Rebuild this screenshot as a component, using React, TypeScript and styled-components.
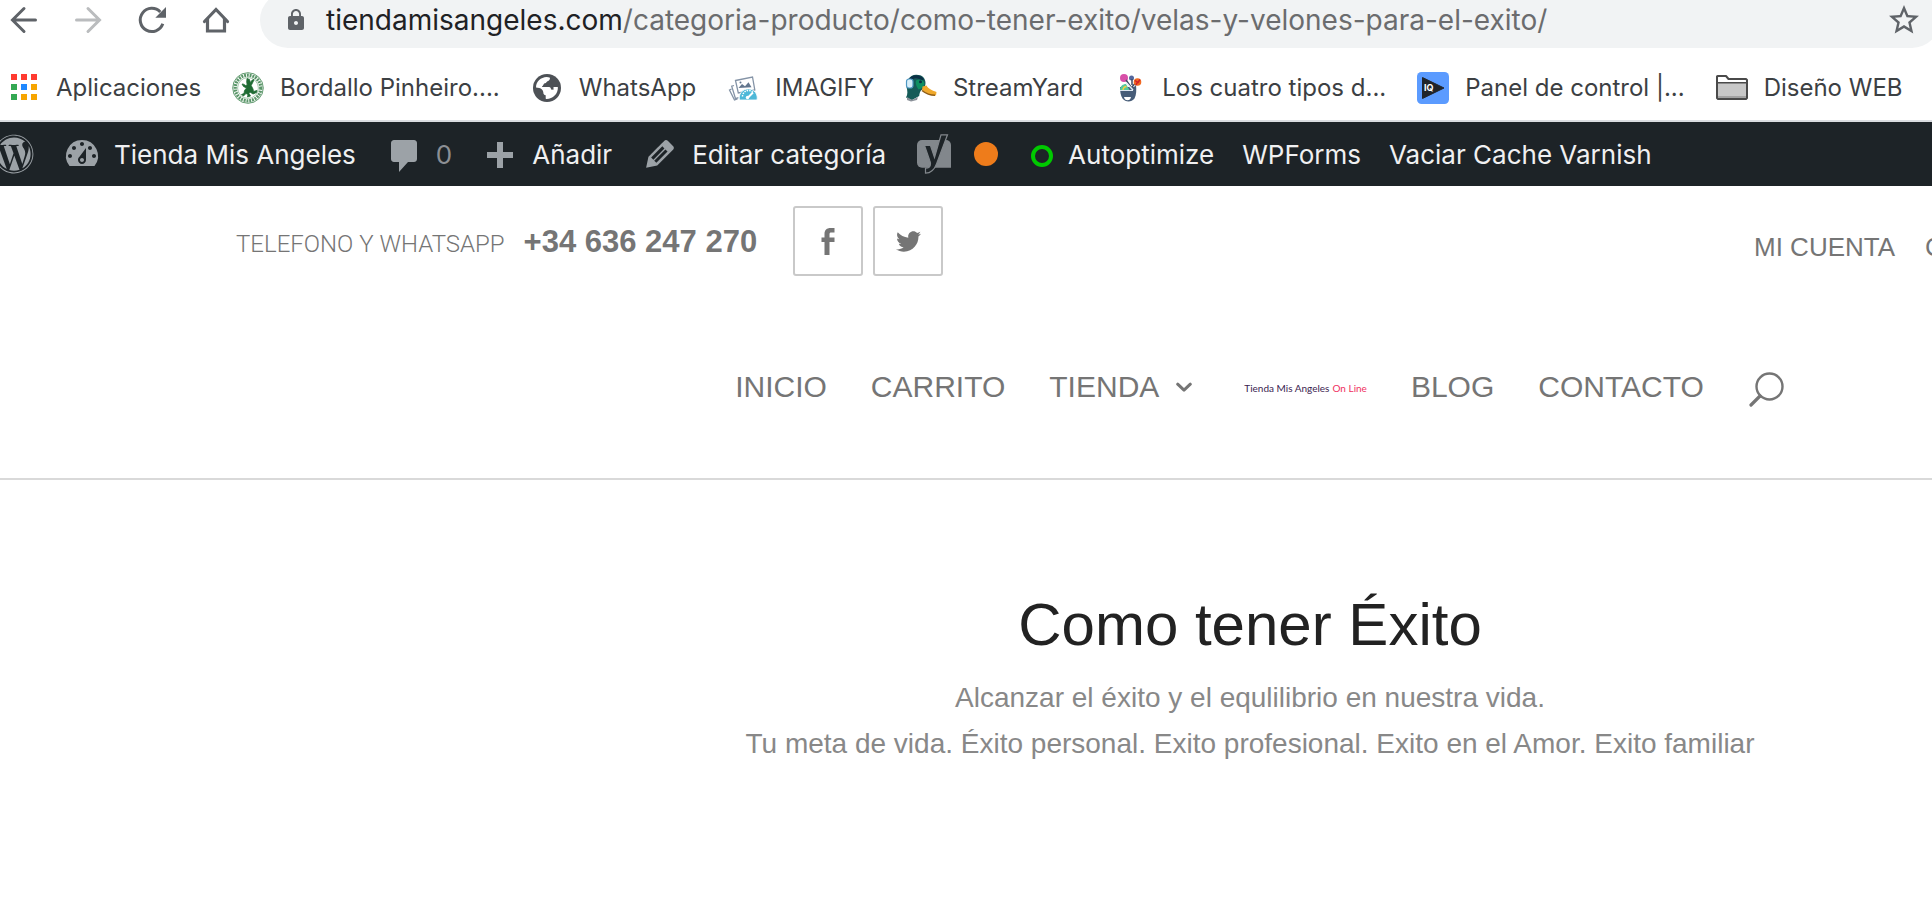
import React from "react";
import styled, { createGlobalStyle } from "styled-components";
import { MdLock, MdStarBorder } from "react-icons/md";
import { FaTwitter, FaWordpress } from "react-icons/fa";

const GlobalStyle = createGlobalStyle`
  * { box-sizing: border-box; }
  body {
    margin: 0;
    background: #fff;
    font-family: "Liberation Sans", Arial, sans-serif;
    overflow-x: hidden;
  }
  a { color: inherit; text-decoration: none; }
  button { padding: 0; border: 0; background: none; color: inherit; font: inherit; cursor: pointer; }
  svg { display: block; flex: none; }
  h1, p, ul { margin: 0; padding: 0; }
  ul { list-style: none; }
`;

/* ---------- browser chrome ---------- */

const Chrome = styled.div`
  font-family: Inter, "Liberation Sans", sans-serif;
  border-bottom: 2px solid #dadce0;
  overflow: hidden;
`;

const Toolbar = styled.div`
  display: flex;
  align-items: flex-end;
  height: 48px;
  padding-left: 4px;
`;

const ToolButtons = styled.div`
  display: flex;
  gap: 24px;
  margin: 0 24px 8px 0;
  color: #5f6368;
`;

const ToolButton = styled.button`
  display: grid;
  place-items: center;
  width: 40px;
  height: 40px;
  &:disabled { color: #babcbe; }
`;

const AddressBar = styled.div`
  display: flex;
  align-items: center;
  flex: 1;
  height: 56px;
  margin-right: -8px;
  padding: 0 18px 0 24px;
  border-radius: 28px;
  background: #f1f3f4;
  color: #5f6368;
`;

const Address = styled.div`
  flex: 1;
  margin-left: 18px;
  font-size: 28px;
  line-height: 40px;
  white-space: nowrap;
  color: #6b6c6e;
  outline: none;
`;

const Host = styled.span`
  color: #202124;
`;

const StarButton = styled(ToolButton)`
  width: 36px;
`;

const Bookmarks = styled.nav`
  display: flex;
  align-items: center;
  gap: 31px;
  height: 72px;
  padding: 8px 0 0 8px;
`;

const Bookmark = styled.a`
  display: flex;
  align-items: center;
  gap: 16px;
  font-size: 24px;
  line-height: 32px;
  white-space: nowrap;
  color: #3c4043;
`;

/* ---------- WordPress admin bar ---------- */

const AdminBar = styled.nav`
  display: flex;
  align-items: center;
  gap: 28px;
  height: 64px;
  background: #1d2327;
  color: #f0f0f1;
  font-family: Inter, "Liberation Sans", sans-serif;
  overflow: hidden;
`;

const AdminItem = styled.a<{ $gap?: number; $bleed?: boolean }>`
  display: flex;
  align-items: center;
  gap: ${(p) => p.$gap ?? 12}px;
  margin-left: ${(p) => (p.$bleed ? -6 : 0)}px;
  font-size: 26px;
  line-height: 32px;
  white-space: nowrap;
  svg { color: #9ca2a7; }
`;

const AdminLabel = styled.span`
  padding-top: 2px;
`;

const Count = styled(AdminLabel)`
  color: #8c8f94;
`;

const Dot = styled.span`
  width: 24px;
  height: 24px;
  border-radius: 50%;
  background: #ee7c1b;
`;

const Ring = styled.span`
  width: 22px;
  height: 22px;
  margin: 4px 3px 0 5px;
  border: 4px solid #00c900;
  border-radius: 50%;
`;

/* ---------- site header ---------- */

const SiteHeader = styled.header`
  border-bottom: 2px solid #d9d9d9;
  color: #757575;
`;

const TopRow = styled.div`
  display: flex;
  align-items: center;
  height: 110px;
  padding-left: 236px;
  overflow: hidden;
`;

const PhoneLabel = styled.span`
  margin-right: 19px;
  padding-top: 6px;
  font-family: Roboto, "Liberation Sans", sans-serif;
  font-size: 24px;
  font-weight: 300;
  line-height: 32px;
`;

const Phone = styled.a`
  margin-right: 36px;
  padding-top: 2px;
  font-size: 31px;
  font-weight: 700;
  line-height: 36px;
`;

const Social = styled.div`
  display: flex;
  gap: 10px;
`;

const SocialLink = styled.a`
  display: grid;
  place-items: center;
  width: 70px;
  height: 70px;
  border: 2px solid #c9c9c9;
  border-radius: 3px;
`;

const AccountMenu = styled.ul`
  display: flex;
  gap: 30px;
  width: 178px;
  margin-left: auto;
  padding-top: 12px;
  font-size: 26px;
  line-height: 32px;
  white-space: nowrap;
`;

const MainNav = styled.nav`
  display: flex;
  align-items: center;
  justify-content: center;
  gap: 44px;
  height: 182px;
  padding-left: 587px;
  font-size: 30px;
  line-height: 36px;
  white-space: nowrap;
`;

const NavLink = styled.a`
  display: flex;
  align-items: center;
  gap: 17px;
`;

const SubmenuLink = styled(NavLink)`
  padding-right: 8px;
`;

const Logo = styled.a`
  display: flex;
  gap: 3px;
  padding-top: 2px;
  font-family: Lato, "Open Sans", sans-serif;
  font-size: 10px;
  line-height: 12px;
  color: #3a2350;
`;

const LogoAccent = styled.span`
  color: #f0305e;
`;

const SearchButton = styled.button`
  padding-top: 5px;
`;

/* ---------- category intro ---------- */

const Intro = styled.main`
  padding: 115px 0 160px 568px;
  text-align: center;
`;

const Title = styled.h1`
  margin-bottom: 20px;
  font-size: 60px;
  font-weight: 400;
  line-height: 60px;
  color: #222;
`;

const Description = styled.p`
  font-size: 28px;
  line-height: 46px;
  color: #888;
`;

/* ---------- drawings ---------- */

const ArrowIcon = ({ forward = false }: { forward?: boolean }) => (
  <svg width="40" height="40" viewBox="0 0 40 40" fill="none" stroke="currentColor" strokeWidth="3" strokeLinecap="round">
    {forward ? <path d="M8.5 20H31M20 8.5L31.500 20 20 31.500" /> : <path d="M31.500 20H9M20 8.500L8.500 20 20 31.500" />}
  </svg>
);

const ReloadIcon = () => (
  <svg width="40" height="40" viewBox="0 0 40 40" fill="none" stroke="currentColor" strokeWidth="3">
    <path d="M28.300 12A11.600 11.600 0 1 0 30.800 23.800" />
    <path d="M34 7v10.700H23.300z" fill="currentColor" stroke="none" />
  </svg>
);

const HomeIcon = () => (
  <svg width="40" height="40" viewBox="0 0 40 40" fill="none" stroke="currentColor" strokeWidth="3.200" strokeLinejoin="miter">
    <path d="M11.500 18V31H28.500V18" />
    <path d="M8.500 21.500L20 9.500 31.500 21.500" strokeLinecap="round" />
  </svg>
);

const AppsIcon = () => {
  const fills = ["#ff3b30", "#ff3b30", "#ff3b30", "#34a853", "#1e88ff", "#f7a500", "#34a853", "#f7a500", "#f7a500"];
  return (
    <svg width="32" height="32" viewBox="0 0 32 32">
      {fills.map((f, i) => (
        <rect key={i} x={3 + (i % 3) * 10} y={2 + Math.floor(i / 3) * 10} width="6" height="6" fill={f} />
      ))}
    </svg>
  );
};

const FrogSeal = () => (
  <svg width="32" height="32" viewBox="0 0 32 32" fill="none" stroke="#2f7a42">
    <circle cx="16" cy="16" r="15.300" strokeWidth="1" opacity=".75" />
    <circle cx="16" cy="16" r="12.800" strokeWidth="3.200" strokeDasharray="1.900 .9" opacity=".8" />
    <circle cx="16" cy="16" r="10.400" strokeWidth=".6" opacity=".7" />
    <path fill="#1f6b33" stroke="#1f6b33" strokeWidth=".8" d="M15 6.500l2.500 1 .8 3 2-2.500 1.700-.5-1 2.500-1.800 3.500 1.800 3.500.5 2.500 3.500-1-.5 2-3.500 1.500-3-2-1 1.500 1.500 2.500-3 1 .5-2.500-2-1-2.500 2.500-2-1.500 2.500-1 .5-3 2-2.500-3-1.500-1.500-2.500 1.500.2 2.200 1.300 1.500-.5-.5-3z" />
  </svg>
);

const GlobeIcon = () => (
  <svg width="32" height="32" viewBox="0 0 32 32">
    <circle cx="16" cy="16" r="14" fill="#4d5156" />
    <path fill="#fff" d="M5 15.500C5 9.500 10 5.200 15.500 5c1.300 0 2.500.3 3.500.7 0 2-.8 3-2.500 3.500-1 .3-1 1.800-2.500 2-1.500.1-1.300 1.500-2 2.300-.6.600-1 .7-1 1.600h7c1.500 0 2 1.300 2 2.500l2.500.2V15h3.500c.4 0 .9.1.9.600C27 22 22 27 15.500 27c-.7 0-.8-.3-.8-1v-2.700c-1.700-.3-2.400-1.300-2.400-3-.2-2.300-2-3.600-4-4.200C7.200 15.700 6 15.700 5 15.500z" />
    <path fill="#4d5156" d="M22 13.200l4.500.2-1-2.400-3-2.500-1.800 2.200z" />
  </svg>
);

const ImagifyIcon = () => (
  <svg width="32" height="32" viewBox="0 0 32 32" fill="none" stroke="#8493a6" strokeWidth="1.300">
    <path d="M4.500 17l-2 1 5 10 3-1M7 13.500l-2.300.7 3.800 12.500 3-1" />
    <path d="M8.500 8.500l17-3.500 2.300 13-16.500 3z" fill="#fff" />
    <path d="M11.500 16l3.500-4 3 2.200 3.500-4 3 5z" fill="#63768e" stroke="none" />
    <circle cx="13.500" cy="10.500" r="1" fill="#63768e" stroke="none" />
    <path d="M12.500 28a9 9 0 1 1 17.500 0z" fill="#4db8d8" stroke="#fff" strokeWidth=".8" />
    <path d="M15.500 24.500a6 6 0 0 1 10.500-4" stroke="#fff" strokeWidth="1.400" strokeDasharray="1.500 1" />
    <path d="M20.500 26l5.500-5.500" stroke="#fff" strokeWidth="2" />
    <circle cx="20.500" cy="25.500" r="1.700" fill="#fff" stroke="none" />
  </svg>
);

const DuckIcon = () => (
  <svg width="32" height="32" viewBox="0 0 32 32">
    <path fill="#155b58" d="M1.500 15C1 8 5 3 11 2.700 17 2.500 20.500 6 20.500 11c0 3-1 5-4.500 7.500-1 1-1.500 3-1.800 5.500L7 28l-6-2.500C3 22 2.500 19 1.500 15z" />
    <path fill="#0b2f45" d="M3 8c3-5.500 12-7 16-.5l-3 1C12 5 8 6 6 9.500z" />
    <path fill="#0e8f62" d="M11 8.500c4-2 8-.5 8.500 3.500-1 3-3 5-6 5.500-2-3-3.500-6-2.500-9z" />
    <circle cx="15.500" cy="9.700" r="1.500" fill="#0b2f45" />
    <path fill="#f0a92c" d="M17.500 14.500l4-1c2 3.500 5 4.500 10 6.500l-.5 3.500c-6-.2-10-2-14-5.500z" />
    <path d="M17 18.500c4 3.200 8 4.800 13 4.800" stroke="#8f5c14" strokeWidth="1.500" fill="none" />
    <rect x="1.500" y="7" width="6.500" height="9" rx="2.500" fill="#d7effa" stroke="#4f98c4" strokeWidth="1.200" />
    <path fill="#8b9199" d="M2 25l5 3 6-3-1 3-6 1.500-4-1.500z" />
  </svg>
);

const HeadIcon = () => (
  <svg width="32" height="32" viewBox="0 0 32 32">
    <circle cx="10" cy="6" r="4" fill="#d84fa8" />
    <circle cx="17.500" cy="6" r="2.500" fill="#54679e" />
    <path d="M12 8l5 7M18 7v6M23 9l-5 6" stroke="#3d4c66" strokeWidth="1.500" />
    <circle cx="23.500" cy="10" r="3.800" fill="#f26a21" />
    <path d="M21 8.500l3 2 2-3M22 13l1.500-3" stroke="#d3202a" strokeWidth="1.500" fill="none" />
    <path fill="#465c78" d="M6 15h14l2-2c.5 5 .5 10-1.500 13.500-3 4-9 4-12 0C6.500 23.500 6 19 6 15z" />
    <path fill="#56c7a0" d="M6 18c0-4 3-6 6-6l3.500 6z" />
    <path d="M9 18c.5-3 2-3.500 3.500-3.500" stroke="#f7d13d" strokeWidth="1.500" fill="none" />
    <path d="M12 10.500l7 7.500" stroke="#e8eef5" strokeWidth="1.500" />
    <path d="M6 18.500h13" stroke="#dfe8f1" strokeWidth="1" />
    <path fill="#fff" d="M10 25h7c-.5 2.500-1.500 3.200-3.500 3.200S10.500 27.500 10 25z" />
  </svg>
);

const IqIcon = () => (
  <svg width="32" height="32" viewBox="0 0 32 32">
    <rect width="32" height="32" rx="4.500" fill="#5b9bff" />
    <path d="M5.500 5.500L27 16 5.500 26.500z" fill="#20242a" stroke="#20242a" strokeLinejoin="round" />
    <text x="7" y="19" fontFamily="Inter, sans-serif" fontSize="9" fontWeight="700" fill="#fff">IQ</text>
  </svg>
);

const FolderIcon = () => (
  <svg width="32" height="32" viewBox="0 0 32 32">
    <path d="M1 26V4.500L2 4h8l2.500 3H30l1 1v18l-1 1H2z" fill="#fff" stroke="#4a4a4a" strokeWidth="2" strokeLinejoin="round" />
    <path d="M2 11.500h28V24H2z" fill="#c8c8c8" />
    <path d="M2 24h28v2H2z" fill="#a3a3a3" />
    <path d="M1 10.800h30" stroke="#4a4a4a" strokeWidth="1.600" />
  </svg>
);

const AdminIcon = ({ d }: { d: string }) => (
  <svg width="40" height="40" viewBox="0 0 20 20" fill="currentColor" fillRule="evenodd">
    <path d={d} />
  </svg>
);

const DASHBOARD =
  "M3.760 16h12.480A7.998 7.998 0 0 0 10 3a7.998 7.998 0 0 0-6.240 13zM10 4c.55 0 1 .45 1 1s-.45 1-1 1-1-.45-1-1 .45-1 1-1zM6 6c.55 0 1 .45 1 1s-.45 1-1 1-1-.45-1-1 .45-1 1-1zm8 0c.55 0 1 .45 1 1s-.45 1-1 1-1-.45-1-1 .45-1 1-1zm-5.370 5.550L12 7v6c0 1.100-.9 2-2 2s-2-.9-2-2c0-.57.24-1.080.63-1.450zM4 10c.55 0 1 .45 1 1s-.45 1-1 1-1-.45-1-1 .45-1 1-1zm12 0c.55 0 1 .45 1 1s-.45 1-1 1-1-.45-1-1 .45-1 1-1zm-5 3c0-.55-.45-1-1-1s-1 .45-1 1 .45 1 1 1 1-.45 1-1z";
const COMMENT =
  "M5 3h10c.9 0 1.500.7 1.500 1.500v8c0 .9-.7 1.500-1.500 1.500h-3l-4.500 5v-5H5c-.9 0-1.500-.7-1.500-1.500v-8C3.500 3.700 4.200 3 5 3z";
const PLUS = "M8.500 4h3v5h5v3h-5v5h-3v-5h-5V9h5z";
const PENCIL =
  "M13.890 3.390l2.710 2.720c.46.46.42 1.240.03 1.640l-8.010 8.020-5.560 1.160 1.160-5.580s7.600-7.630 7.990-8.030c.39-.39 1.220-.39 1.680.07zm-2.730 2.790l-5.590 5.610 1.110 1.110 5.540-5.650zm-2.970 8.230l5.580-5.600-1.070-1.080-5.590 5.600z";

const YoastIcon = () => (
  <svg width="40" height="40" viewBox="0 0 40 40">
    <path d="M8 6h24a5 5 0 0 1 5 5v22.700H8a5 5 0 0 1-5-5V11a5 5 0 0 1 5-5z" fill="#82878c" />
    <path
      d="M27 .8h6.500L22.500 30c-2 5.500-5 9-11 9.200v-5c3.500-.2 5-2 5-4.500 0-1.200-.3-2-.7-3L10.500 11.500h6l4 12z"
      fill="#1d2327"
      stroke="#82878c"
      strokeWidth="1.200"
    />
  </svg>
);

const FacebookIcon = () => (
  <svg width="14" height="27" viewBox="0 0 14 27" fill="currentColor">
    <path d="M13.500 0v4.500H10.200c-1.200 0-1.700.5-1.700 1.600v3.400h5v4.500h-5V27h-5V14H.5V9.500h3V6c0-4 2.300-6 6-6z" />
  </svg>
);

const ChevronIcon = () => (
  <svg width="16" height="12" viewBox="0 0 16 12" fill="none" stroke="currentColor" strokeWidth="3" strokeLinecap="round">
    <path d="M1.700 3.200L8 9.200 14.300 3.200" strokeLinejoin="round" />
  </svg>
);

const SearchIcon = () => (
  <svg width="36" height="35" viewBox="0 0 36 35" fill="none" stroke="currentColor">
    <circle cx="21.500" cy="14.500" r="13" strokeWidth="2.400" />
    <path d="M12 24L3 33" strokeWidth="3.200" strokeLinecap="round" />
  </svg>
);

const BOOKMARKS = [
  { label: "Aplicaciones", Icon: AppsIcon },
  { label: "Bordallo Pinheiro....", Icon: FrogSeal },
  { label: "WhatsApp", Icon: GlobeIcon },
  { label: "IMAGIFY", Icon: ImagifyIcon },
  { label: "StreamYard", Icon: DuckIcon },
  { label: "Los cuatro tipos d...", Icon: HeadIcon },
  { label: "Panel de control |...", Icon: IqIcon },
  { label: "Diseño WEB", Icon: FolderIcon },
];

export default function App() {
  return (
    <>
      <GlobalStyle />
      <Chrome>
        <Toolbar>
          <ToolButtons>
            <ToolButton aria-label="Atrás"><ArrowIcon /></ToolButton>
            <ToolButton aria-label="Adelante" disabled><ArrowIcon forward /></ToolButton>
            <ToolButton aria-label="Recargar"><ReloadIcon /></ToolButton>
            <ToolButton aria-label="Inicio"><HomeIcon /></ToolButton>
          </ToolButtons>
          <AddressBar>
            <MdLock size={24} />
            <Address role="textbox" aria-label="Dirección" tabIndex={0}>
              <Host>tiendamisangeles.com</Host>/categoria-producto/como-tener-exito/velas-y-velones-para-el-exito/
            </Address>
            <StarButton aria-label="Añadir a marcadores"><MdStarBorder size={36} /></StarButton>
          </AddressBar>
        </Toolbar>
        <Bookmarks aria-label="Marcadores">
          {BOOKMARKS.map(({ label, Icon }) => (
            <Bookmark href="#" key={label}><Icon />{label}</Bookmark>
          ))}
        </Bookmarks>
      </Chrome>

      <AdminBar aria-label="Barra de administración">
        <AdminItem href="#" $bleed aria-label="WordPress"><FaWordpress size={40} /></AdminItem>
        <AdminItem href="#"><AdminIcon d={DASHBOARD} /><AdminLabel>Tienda Mis Angeles</AdminLabel></AdminItem>
        <AdminItem href="#"><AdminIcon d={COMMENT} /><Count>0</Count></AdminItem>
        <AdminItem href="#"><AdminIcon d={PLUS} /><AdminLabel>Añadir</AdminLabel></AdminItem>
        <AdminItem href="#"><AdminIcon d={PENCIL} /><AdminLabel>Editar categoría</AdminLabel></AdminItem>
        <AdminItem href="#" $gap={20} aria-label="Yoast SEO"><YoastIcon /><Dot /></AdminItem>
        <AdminItem href="#"><Ring /><AdminLabel>Autoptimize</AdminLabel></AdminItem>
        <AdminItem href="#"><AdminLabel>WPForms</AdminLabel></AdminItem>
        <AdminItem href="#"><AdminLabel>Vaciar Cache Varnish</AdminLabel></AdminItem>
      </AdminBar>

      <SiteHeader>
        <TopRow>
          <PhoneLabel>TELEFONO Y WHATSAPP</PhoneLabel>
          <Phone href="tel:+34636247270">+34 636 247 270</Phone>
          <Social>
            <SocialLink href="#" aria-label="Facebook"><FacebookIcon /></SocialLink>
            <SocialLink href="#" aria-label="Twitter"><FaTwitter size={25} /></SocialLink>
          </Social>
          <AccountMenu>
            <li><a href="#">MI CUENTA</a></li>
            <li><a href="#">C</a></li>
          </AccountMenu>
        </TopRow>
        <MainNav aria-label="Principal">
          <NavLink href="#">INICIO</NavLink>
          <NavLink href="#">CARRITO</NavLink>
          <SubmenuLink href="#">TIENDA<ChevronIcon /></SubmenuLink>
          <Logo href="#">Tienda Mis Angeles<LogoAccent>On Line</LogoAccent></Logo>
          <NavLink href="#">BLOG</NavLink>
          <NavLink href="#">CONTACTO</NavLink>
          <SearchButton aria-label="Buscar"><SearchIcon /></SearchButton>
        </MainNav>
      </SiteHeader>

      <Intro>
        <Title>Como tener Éxito</Title>
        <Description>Alcanzar el éxito y el equlilibrio en nuestra vida.</Description>
        <Description>Tu meta de vida. Éxito personal. Exito profesional. Exito en el Amor. Exito familiar</Description>
      </Intro>
    </>
  );
}
